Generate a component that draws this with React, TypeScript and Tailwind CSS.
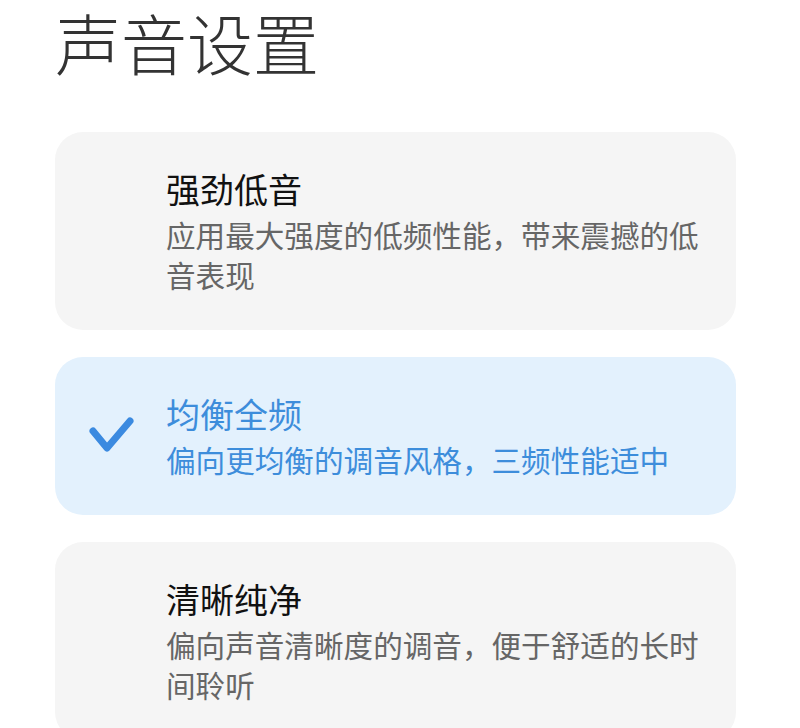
import { useState } from 'react'

type SoundMode = {
  id: string
  title: string
  desc: string
}

const MODES: SoundMode[] = [
  { id: 'bass', title: '强劲低音', desc: '应用最大强度的低频性能，带来震撼的低音表现' },
  { id: 'balanced', title: '均衡全频', desc: '偏向更均衡的调音风格，三频性能适中' },
  { id: 'clear', title: '清晰纯净', desc: '偏向声音清晰度的调音，便于舒适的长时间聆听' },
]

function CheckIcon() {
  return (
    <svg width="46" height="40" viewBox="0 0 46 40" fill="none">
      <polyline
        points="5,15 19,32 42,5"
        stroke="#3b8ae0"
        strokeWidth="7"
        strokeLinecap="round"
        strokeLinejoin="round"
      />
    </svg>
  )
}

export default function App() {
  const [selected, setSelected] = useState('balanced')

  return (
    <div
      className="min-h-screen bg-white pl-[55px] pr-[64px]"
      style={{ fontFamily: '"Noto Sans CJK SC", "Noto Sans", sans-serif' }}
    >
      <h1 className="text-[66px] leading-[82px] font-light text-[#333333]">声音设置</h1>

      <div className="mt-[50px] flex flex-col gap-[27px]">
        {MODES.map(mode => {
          const active = mode.id === selected
          return (
            <button
              key={mode.id}
              onClick={() => setSelected(mode.id)}
              className={`relative flex items-center rounded-[28px] pl-[111px] pr-[18px] pt-[35px] pb-[35px] text-left ${
                active ? 'bg-[#e3f1fd]' : 'bg-[#f5f5f5]'
              }`}
            >
              {active && (
                <span className="absolute left-[33px] top-1/2 -translate-y-1/2">
                  <CheckIcon />
                </span>
              )}
              <div className="flex flex-col gap-[4px]">
                <div className={`text-[34px] leading-[44px] ${active ? 'text-[#3d8ddb]' : 'text-[#111111]'}`}>
                  {mode.title}
                </div>
                <div className={`text-[29.6px] leading-[40px] ${active ? 'text-[#3d8ddb]' : 'text-[#666666]'}`}>
                  {mode.desc}
                </div>
              </div>
            </button>
          )
        })}
      </div>
    </div>
  )
}
